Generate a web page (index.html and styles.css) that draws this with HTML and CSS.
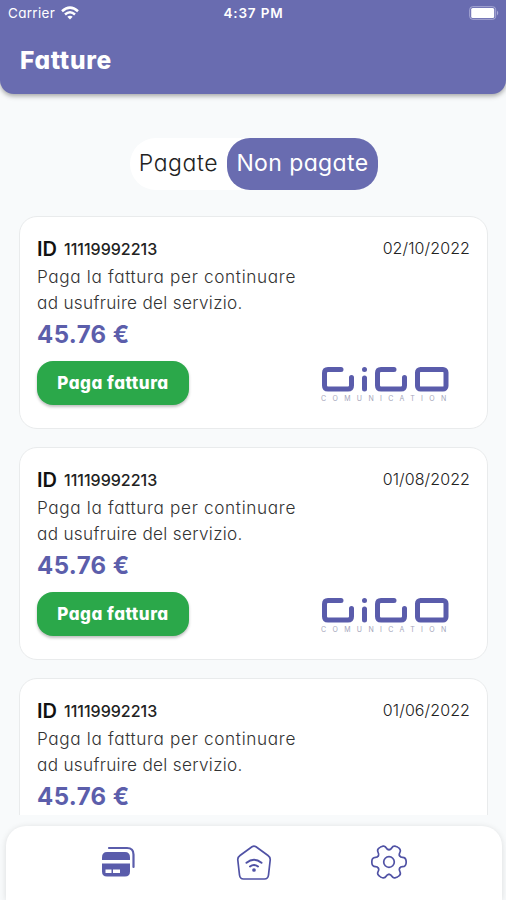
FILE: index.html
```html
<!DOCTYPE html>
<html lang="it">
<head>
<meta charset="utf-8">
<meta name="viewport" content="width=device-width, initial-scale=1">
<title>Fatture</title>
<link rel="stylesheet" href="styles.css">
</head>
<body>
<svg class="defs" width="0" height="0" aria-hidden="true">
  <symbol id="brand" viewBox="0 0 128 28">
    <g fill="none" stroke="#5a5cab" stroke-width="5" stroke-linecap="round" stroke-linejoin="round">
      <path d="M20 3.500H7Q3.500 3.500 3.500 7V19.500Q3.500 23 7 23H27Q30.500 23 30.500 19.500V11.500"/>
      <path d="M43.500 12V23"/>
      <path d="M43.500 3.500V3.510"/>
      <path d="M73 3.500H60Q56.500 3.500 56.500 7V19.500Q56.500 23 60 23H80Q83.500 23 83.500 19.500V11.500"/>
      <rect x="96.500" y="3.500" width="28.500" height="19.500" rx="3"/>
    </g>
  </symbol>
  <symbol id="tooth" viewBox="-18 -18 36 36">
    <path d="M10.650 -6.150C11.300 -5 12.300 -4.700 13.500 -4.700C16 -4.700 17.200 -2.800 17.200 0S16 4.700 13.500 4.700C12.300 4.700 11.300 5 10.650 6.150" fill="none" stroke="#5052a5" stroke-width="1.700" stroke-linecap="round"/>
  </symbol>
</svg>
<div class="screen">
  <header class="header">
    <div class="status">
      <div class="carrier"><span>Carrier</span>
        <svg width="18" height="14" viewBox="0 0 18 14" fill="none" stroke="#fff" stroke-width="2.500"><path d="M1 5.200Q9-2 17 5.200M4 8.500Q9 4 14 8.500"/><path d="M9 13.500L6.300 10.800Q9 8.600 11.700 10.800Z" fill="#fff" stroke="none"/></svg>
      </div>
      <span class="time">4:37 PM</span>
      <svg class="battery" width="30" height="14" viewBox="0 0 30 14"><rect x=".7" y=".7" width="26" height="12.600" rx="3" fill="none" stroke="#a9abd5"/><rect x="2.200" y="2" width="23" height="10" rx="1.500" fill="#fff"/><path d="M28 4.500Q30.500 7 28 9.500Z" fill="#a9abd5"/></svg>
    </div>
    <h1 class="title">Fatture</h1>
  </header>
  <main class="content">
    <div class="tabs"><button class="tab">Pagate</button><button class="tab active">Non pagate</button></div>
    <article class="card">
      <div class="top"><h2><span class="id">ID</span><span class="num">11119992213</span></h2><time>02/10/2022</time></div>
      <p class="desc"><span>Paga la fattura per continuare</span><br><span class="second">ad usufruire del servizio.</span></p>
      <strong class="price">45.76 €</strong>
      <div class="bottom"><button class="pay">Paga fattura</button><div class="logo"><svg width="128" height="28"><use href="#brand"/></svg><span>COMUNICATION</span></div></div>
    </article>
    <article class="card">
      <div class="top"><h2><span class="id">ID</span><span class="num">11119992213</span></h2><time>01/08/2022</time></div>
      <p class="desc"><span>Paga la fattura per continuare</span><br><span class="second">ad usufruire del servizio.</span></p>
      <strong class="price">45.76 €</strong>
      <div class="bottom"><button class="pay">Paga fattura</button><div class="logo"><svg width="128" height="28"><use href="#brand"/></svg><span>COMUNICATION</span></div></div>
    </article>
    <article class="card">
      <div class="top"><h2><span class="id">ID</span><span class="num">11119992213</span></h2><time>01/06/2022</time></div>
      <p class="desc"><span>Paga la fattura per continuare</span><br><span class="second">ad usufruire del servizio.</span></p>
      <strong class="price">45.76 €</strong>
    </article>
  </main>
  <nav class="nav">
    <svg width="36" height="36" viewBox="0 0 36 36"><path d="M9 4H27Q33.500 4 33.500 10.500V23" fill="none" stroke="#5a5cab" stroke-width="2.200" stroke-linecap="round"/><path d="M2 16V13.500Q2 8 7 8H25Q30 8 30 13.500V16Z" fill="#5a5cab"/><path fill="#5a5cab" fill-rule="evenodd" d="M2 19.500H30V27.500Q30 32.500 25 32.500H7Q2 32.500 2 27.500ZM5.500 25.500V29H11.500V25.500ZM13 25.500V29H20V25.500Z"/></svg>
    <svg width="36" height="36" viewBox="0 0 36 36" fill="none" stroke="#5052a5" stroke-width="1.700" stroke-linecap="round" stroke-linejoin="round"><path d="M16 2.800Q18 1.600 20 2.800L32 11.500Q34.500 13.300 34.200 16L32.500 31Q32 35 28.500 35H7.500Q4 35 3.500 31L1.800 16Q1.500 13.300 4 11.500Z"/><path d="M10.500 18.800Q18 12.800 25.500 18.800M14 22.500Q18 19.400 22 22.500" stroke-width="2"/><circle cx="18" cy="26" r="1" fill="#5052a5"/></svg>
    <svg width="36" height="36" viewBox="-18 -18 36 36">
      <g id="half"><use href="#tooth" x="-18" y="-18" width="36" height="36"/><g transform="rotate(60)"><use href="#tooth" x="-18" y="-18" width="36" height="36"/></g><g transform="rotate(120)"><use href="#tooth" x="-18" y="-18" width="36" height="36"/></g></g>
      <use href="#half" transform="rotate(180)"/>
      <circle r="5.300" fill="none" stroke="#5052a5" stroke-width="1.700"/>
    </svg>
  </nav>
</div>
</body>
</html>
```
FILE: styles.css
```css
*{box-sizing:border-box}
body{margin:0;background:#f8fafb;font-family:Inter,"Liberation Sans",sans-serif;font-feature-settings:"cv11";color:#222}
button{font:inherit;font-feature-settings:inherit;border:0;padding:0}
h1,h2,p{margin:0}
.defs{position:absolute}
.screen{height:900px;display:flex;flex-direction:column;overflow:hidden}
.header{height:94px;flex:none;background:#696cb0;border-radius:0 0 14px 14px;color:#fff;box-shadow:0 2px 5px rgba(0,0,0,.35)}
.status{height:26px;display:grid;grid-template-columns:1fr auto 1fr;align-items:center;padding:0 7px 0 8px;font-size:13.500px}
.carrier{display:flex;align-items:center;gap:5px;letter-spacing:.3px}
.carrier span{width:48px}
.time{font-weight:600;letter-spacing:.8px}
.battery{justify-self:end}
.title{font-size:24.500px;font-weight:800;letter-spacing:.7px;line-height:30px;margin:19px 0 0 20px}
.content{flex:1;padding:44px 18px 0 19px;overflow:hidden}
.tabs{width:248px;height:52px;margin-left:111px;display:flex;background:#fff;border-radius:26px}
.tab{flex:none;width:97px;background:none;font-size:23px;font-weight:300;letter-spacing:.6px;line-height:50px;padding-bottom:2px;color:#222}
.active{width:151px;border-radius:23px;background:#696cb0;color:#fff;font-weight:400;letter-spacing:.4px}
.card{height:213px;margin-top:26px;padding:18px 17px;background:#fff;border:1px solid #e9ebec;border-radius:18px}
.card+.card{margin-top:18px}
.top{display:flex;justify-content:space-between;height:28px;line-height:28px}
h2{display:flex;gap:7px;font-weight:500;color:#111}
.id{font-size:20px;font-weight:600}
.num{font-size:16px;line-height:29px;color:#222}
time{font-size:16px;font-weight:300;letter-spacing:.1px;line-height:26px}
.desc{font-size:17.200px;font-weight:300;letter-spacing:.65px;line-height:26px;padding-top:1px;color:#333}
.second{letter-spacing:.3px}
.price{display:block;font-size:24px;letter-spacing:.4px;line-height:36px;color:#5c5eab;padding-top:1px}
.bottom{display:flex;justify-content:space-between;padding-top:8px}
.pay{width:152px;height:44px;border-radius:16px;background:#2ba84a;color:#fff;font-size:17px;letter-spacing:.5px;font-weight:800;box-shadow:0 2px 3px rgba(0,0,0,.25)}
.logo{width:128px;height:38px;margin:5px 21px 0 0}
.logo svg{display:block}
.logo span{display:block;font-size:7px;line-height:10px;letter-spacing:6.350px;color:#a5a6bb;white-space:nowrap}
.nav{height:74px;flex:none;margin:11px 4px 0 6px;padding:18px 95px 0 94px;display:flex;justify-content:space-between;background:#fff;border-radius:20px 20px 0 0;box-shadow:0 1px 6px rgba(0,0,0,.12)}
```
